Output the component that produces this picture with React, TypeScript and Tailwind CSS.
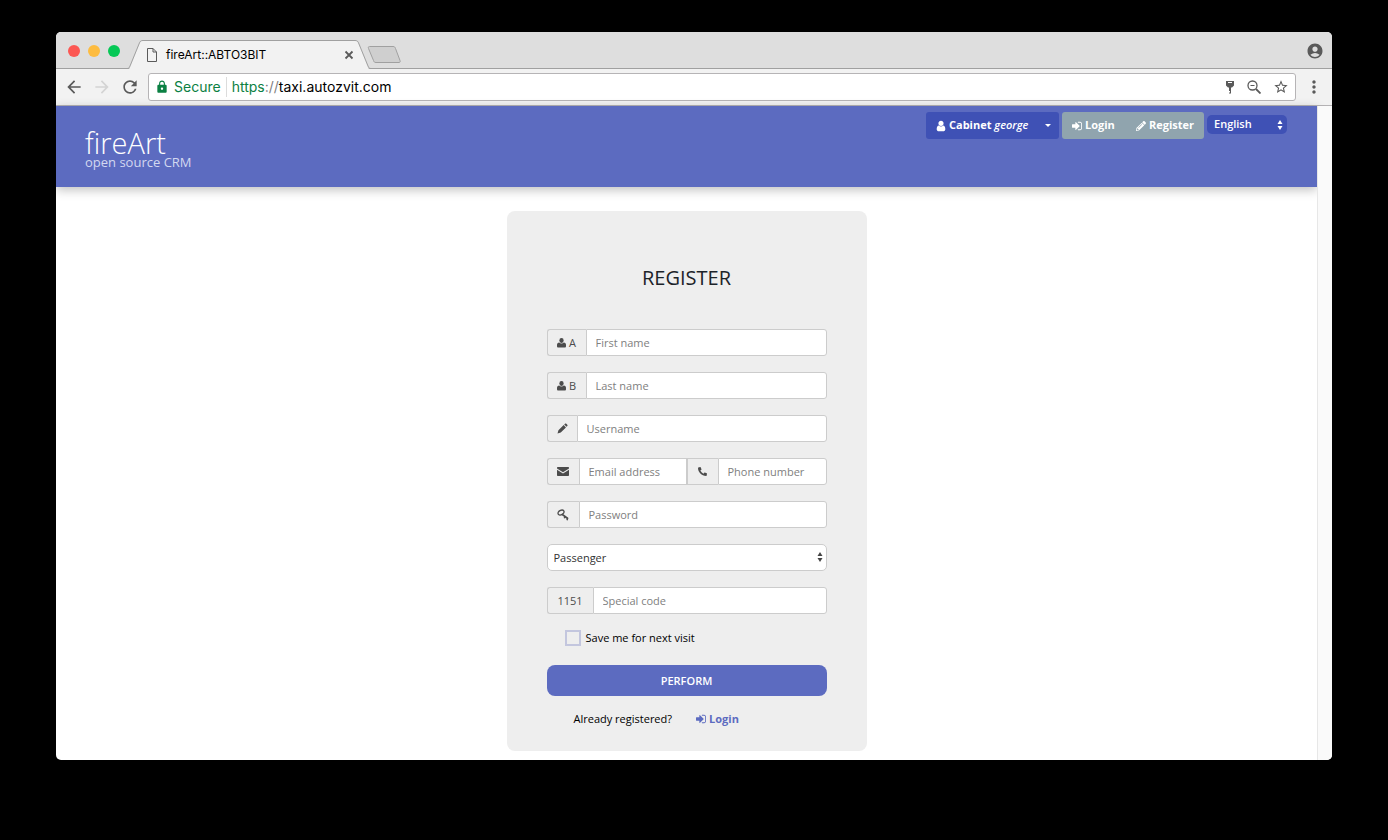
import type { ReactNode } from "react";
import { FaPencilAlt, FaPhoneAlt } from "react-icons/fa";
import { MdAccountCircle, MdLock, MdStarBorder, MdRefresh, MdArrowBack, MdArrowForward, MdMoreVert } from "react-icons/md";

interface FieldProps {
  id: string
  label: string
  addon: ReactNode
  addonClass: string
  type?: string
  joined?: "left" | "right"
}

function UserIcon({ className }: { className?: string }) {
  return (
    <svg viewBox="0 0 1792 1792" fill="currentColor" className={className}>
      <path d="M1536 1399q0 109-62.5 187t-150.5 78h-854q-88 0-150.5-78t-62.5-187q0-85 8.5-160.5t31.5-152 58.5-131 94-89 134.5-34.5q131 128 313 128t313-128q76 0 134.5 34.5t94 89 58.5 131 31.5 152 8.5 160.5zm-256-887q0 159-112.5 271.5t-271.5 112.5-271.5-112.5-112.5-271.5 112.5-271.5 271.5-112.5 271.5 112.5 112.5 271.5z" />
    </svg>
  )
}

// squatter bust than the one in the header
function PersonIcon() {
  return (
    <svg viewBox="0 0 18 20" fill="currentColor" className="w-[9px] h-[10px]">
      <ellipse cx="9" cy="5" rx="4.3" ry="4.8" />
      <path d="M4.500 9c1.200 1.500 2.700 2.200 4.500 2.200s3.300-.7 4.500-2.200c3 .3 4.500 2 4.500 5v2.500c0 1.500-1 2.500-2.500 2.500h-13C1 19 0 18 0 16.500V14c0-3 1.500-4.700 4.500-5z" />
    </svg>
  )
}

function SignInIcon({ className }: { className?: string }) {
  return (
    <svg viewBox="0 0 1536 1792" fill="currentColor" className={className}>
      <path d="M1184 896q0 26-19 45l-544 544q-19 19-45 19t-45-19-19-45v-288h-448q-26 0-45-19t-19-45v-384q0-26 19-45t45-19h448v-288q0-26 19-45t45-19 45 19l544 544q19 19 19 45zm352-352v704q0 119-84.500 203.500t-203.500 84.500h-320q-13 0-22.500-9.500t-9.500-22.500q0-4-1-20t-.5-26.500 3-23.500 10-19.500 20.500-6.500h320q66 0 113-47t47-113v-704q0-66-47-113t-113-47h-312l-11.500-1-11.500-3-8-5.500-7-9-2-13.500q0-4-1-20t-.5-26.500 3-23.500 10-19.500 20.500-6.500h320q119 0 203.500 84.500t84.500 203.500z" />
    </svg>
  )
}

function KeyIcon() {
  return (
    <svg viewBox="0 0 24 24" fill="none" stroke="currentColor" className="size-3">
      <ellipse cx="8" cy="7" rx="6.400" ry="4.400" transform="rotate(-30 8 7)" strokeWidth="2.600" />
      <path d="M10 10.500l11.500 8.500" strokeWidth="3.200" />
      <path d="M16.500 14.500l-2 4M21.500 17.500l-1.500 5" strokeWidth="3" />
    </svg>
  )
}

function PencilIcon() {
  return (
    <svg viewBox="0 0 22 22" fill="currentColor" className="size-[11px]">
      <path d="M16 1.500c.8-.8 1.800-.8 2.600 0l2 2c.8.8.8 1.800 0 2.600L19 7.700 14.400 3.100zM13.300 4.200l4.600 4.600L7.500 19.200 1 21l1.900-6.400z" />
    </svg>
  )
}

function EnvelopeIcon() {
  return (
    <svg viewBox="0 0 24 18" fill="currentColor" className="w-3 h-[9px]">
      <path d="M2 0h20c1.200 0 2 .8 2 2v1L12 10.500 0 3V2C0 .8.8 0 2 0z" />
      <path d="M0 5.500l12 7.500 12-7.500V16c0 1.200-.8 2-2 2H2c-1.200 0-2-.8-2-2z" />
    </svg>
  )
}

function UpDownIcon({ className }: { className?: string }) {
  return (
    <svg viewBox="0 0 6 10" fill="currentColor" className={className}>
      <path d="M3 0l2.500 4h-5zM3 10L.5 6h5z" />
    </svg>
  )
}

function TabStrip() {
  return (
    <div className="flex h-[37px] bg-[#dedede] border-b border-[#a0a0a0] pl-3">
      <div className="flex items-center gap-2 w-[59px] pt-[2px]">
        <span className="size-3 rounded-full bg-[#fc5753]" />
        <span className="size-3 rounded-full bg-[#fdbc40]" />
        <span className="size-3 rounded-full bg-[#06c856]" />
      </div>
      <div className="relative h-[37px] w-[244px] shrink-0">
        <svg viewBox="0 0 244 37" className="absolute inset-0 size-full">
          <path d="M1 37C3 37 3 35 4 33L12 13C13 10 14 8.500 17 8.500H227C230 8.500 231 10 232 13L240 33C241 35 241 37 243 37z" fill="#f2f2f2" />
          <path d="M0 36.500C2 36.500 2 36 3 34L12 12C13 9 14 8.500 16 8.500H228C230 8.500 231 9 232 12L241 34C242 36 242 36.500 244 36.500" fill="none" stroke="#a0a0a0" />
        </svg>
        <div className="relative flex items-center h-full pt-2 pl-[19px] pr-[17px]">
          <svg viewBox="0 0 12 14" fill="none" stroke="#5a5a5a" className="w-3 h-[14px]">
            <path d="M1.500 .5h5.500l3.500 3.500v9.500h-9zM7 .5v3.500h3.500" />
          </svg>
          <span className="ml-2 text-xs text-black">fireArt::АВТОЗВІТ</span>
          <button aria-label="Close tab" className="ml-auto text-[#5a5a5a]">
            <svg viewBox="0 0 10 10" fill="none" stroke="currentColor" strokeWidth="1.800" className="size-[10px]">
              <path d="M1.500 1.500l7 7M8.500 1.500l-7 7" />
            </svg>
          </button>
        </div>
      </div>
      <button aria-label="New tab" className="self-center -ml-1 mt-2">
        <svg viewBox="0 0 34 17" className="w-[34px] h-[17px]">
          <path d="M2.500 .5H26c1.500 0 2 .5 2.500 2l4.500 12c.5 1.500 0 2-1 2H9c-1.500 0-2-.5-2.500-2l-5-12c-.5-1.500 0-2 1-2z" fill="#cfcfcf" stroke="#a0a0a0" />
        </svg>
      </button>
      <button aria-label="Profile" className="ml-auto mr-2 pt-[2px] text-[#5a5a5a]">
        <MdAccountCircle className="size-[18px]" />
      </button>
    </div>
  )
}

function Toolbar() {
  return (
    <div className="flex items-center h-[37px] bg-[#f2f2f2] border-b border-[#b5b3b5] px-2 text-[#5a5a5a]">
      <button aria-label="Back"><MdArrowBack className="size-5" /></button>
      <button aria-label="Forward" className="ml-2 text-[#d4d4d4]"><MdArrowForward className="size-5" /></button>
      <button aria-label="Reload" className="ml-2"><MdRefresh className="size-5" /></button>
      <div className="flex flex-1 items-center h-7 ml-2 px-[6px] bg-white border border-[#b6b4b6] rounded-[3px] text-sm">
        <MdLock className="size-[14px] text-[#0b8043]" />
        <span className="ml-[5px] text-[#0b8043]">Secure</span>
        <span className="w-px h-5 mx-[5px] bg-[#dcdcdc]" />
        <span className="text-black">
          <span className="text-[#0b8043]">https</span>
          <span className="text-[#808080]">://</span>
          taxi.autozvit.com
        </span>
        <div className="flex items-center gap-3 ml-auto">
          <svg viewBox="0 0 10 14" fill="currentColor" className="w-[10px] h-[14px]">
            <path fillRule="evenodd" d="M1 1h8v4.500L7 7.500H6v6H4v-1h1v-1.500H4v-3.500H3L1 5.500zM3 2v1h4V2z" />
          </svg>
          <svg viewBox="0 0 14 14" fill="none" stroke="currentColor" className="size-[14px]">
            <circle cx="5.500" cy="5.500" r="4.500" strokeWidth="1.300" />
            <path d="M3.500 5.500h4" />
            <path d="M9 9l4.500 4.500" strokeWidth="1.800" />
          </svg>
          <MdStarBorder className="size-4" />
        </div>
      </div>
      <button aria-label="Menu" className="ml-2"><MdMoreVert className="size-5" /></button>
    </div>
  )
}

function SiteHeader() {
  return (
    <header className="flex items-start justify-between h-[81px] bg-[#5c6bc0] pl-[29px] pr-[30px] pt-[6px] text-white shadow-[0_3px_10px_rgba(0,0,0,0.25)]">
      <div className="pt-4">
        <div className="text-[29px] leading-[29px] font-light">fireArt</div>
        <div className="text-[13px] leading-[10px] text-[#d3d8f0]">open source CRM</div>
      </div>
      <nav className="flex items-start gap-[3px] text-[11px] font-bold">
        <button className="flex items-center h-[27px] w-[133px] px-2 rounded-[3px] bg-[#3f51b5]">
          <UserIcon className="size-3 ml-px mr-[2px]" />
          <span>Cabinet <i className="font-semibold">george</i></span>
          <svg viewBox="0 0 6 3" fill="currentColor" className="w-[6px] h-[3px] ml-auto">
            <path d="M0 0h6L3 3z" />
          </svg>
        </button>
        <div className="flex items-center justify-between h-[27px] w-[142px] px-[10px] rounded-[3px] bg-[#90a4ae]">
          <a href="#login" className="flex items-center gap-[3px]"><SignInIcon className="w-[10px] h-3" />Login</a>
          <a href="#register" className="flex items-center gap-[3px]"><FaPencilAlt className="size-[10px]" />Register</a>
        </div>
        <div className="relative w-20 mt-[3px]">
          <select aria-label="Language" className="block appearance-none w-full h-[19px] pl-[7px] rounded-[5px] bg-[#3f51b5] text-[11px] font-semibold">
            <option>English</option>
          </select>
          <UpDownIcon className="absolute right-1 top-[5px] w-[6px] h-[10px] pointer-events-none" />
        </div>
      </nav>
    </header>
  )
}

function Field({ id, label, addon, addonClass, type = "text", joined }: FieldProps) {
  return (
    <div className="flex w-full min-w-0 h-[27px]">
      <label
        htmlFor={id}
        aria-label={label}
        className={`flex shrink-0 items-center justify-center gap-[3px] bg-[#eeeeee] border border-r-0 border-[#cccccc] text-[#4c4c4c] ${joined === "right" ? "" : "rounded-l-[3px]"} ${addonClass}`}
      >
        {addon}
      </label>
      <input
        id={id}
        type={type}
        placeholder={label}
        className={`flex-1 min-w-0 px-[9px] bg-white border border-[#cccccc] text-[#555555] placeholder:text-[#808080] outline-none ${joined === "left" ? "" : "rounded-r-[3px]"}`}
      />
    </div>
  )
}

function RegisterForm() {
  return (
    <form className="w-[360px] mx-auto mt-6 px-10 pt-[53px] pb-6 rounded-lg bg-[#eeeeee] text-[11px] leading-4">
      <h1 className="text-xl leading-7 text-center text-[#1c2329]">REGISTER</h1>
      <div className="flex flex-col gap-4 mt-[37px]">
        <Field id="first" label="First name" addonClass="w-[39px]" addon={<><PersonIcon />A</>} />
        <Field id="last" label="Last name" addonClass="w-[39px]" addon={<><PersonIcon />B</>} />
        <Field id="username" label="Username" addonClass="w-[30px]" addon={<PencilIcon />} />
        <div className="flex">
          <Field id="email" label="Email address" type="email" joined="left" addonClass="w-8" addon={<EnvelopeIcon />} />
          <Field id="phone" label="Phone number" type="tel" joined="right" addonClass="w-[31px]" addon={<FaPhoneAlt className="size-[9px]" />} />
        </div>
        <Field id="password" label="Password" type="password" addonClass="w-8" addon={<KeyIcon />} />
        <div className="relative">
          <select aria-label="Role" className="block appearance-none w-full h-[27px] pl-[6px] rounded-[5px] bg-white border border-[#cccccc] text-[#333333]">
            <option>Passenger</option>
          </select>
          <UpDownIcon className="absolute right-1 top-2 w-[6px] h-[10px] text-[#444444] pointer-events-none" />
        </div>
        <Field id="code" label="Special code" addonClass="w-[46px]" addon="1151" />
      </div>
      <label className="flex items-center gap-[5px] mt-4 ml-[18px] text-black">
        <input type="checkbox" className="appearance-none size-4 border-2 border-[#c3c6de]" />
        Save me for next visit
      </label>
      <button type="submit" className="block w-full h-[31px] mt-[19px] rounded-lg bg-[#5c6bc0] text-white font-semibold">PERFORM</button>
      <div className="flex items-center gap-6 mt-[15px] ml-[27px] text-black">
        Already registered?
        <a href="#login" className="flex items-center gap-[3px] font-bold text-[#5c6bc0]"><SignInIcon className="w-[10px] h-3" />Login</a>
      </div>
    </form>
  )
}

export default function App() {
  return (
    <div className="flex min-h-screen bg-black px-14 pt-8 pb-20">
      <div className="flex flex-1 flex-col rounded-[5px] overflow-hidden bg-white font-['Inter',sans-serif]">
        <TabStrip />
        <Toolbar />
        <div className="flex flex-1 font-['Open_Sans',sans-serif]">
          <main className="flex-1 pb-2">
            <SiteHeader />
            <RegisterForm />
          </main>
          <div className="w-[15px] bg-[#fafafa] border-l border-[#e7e7e7]" />
        </div>
      </div>
    </div>
  )
}
